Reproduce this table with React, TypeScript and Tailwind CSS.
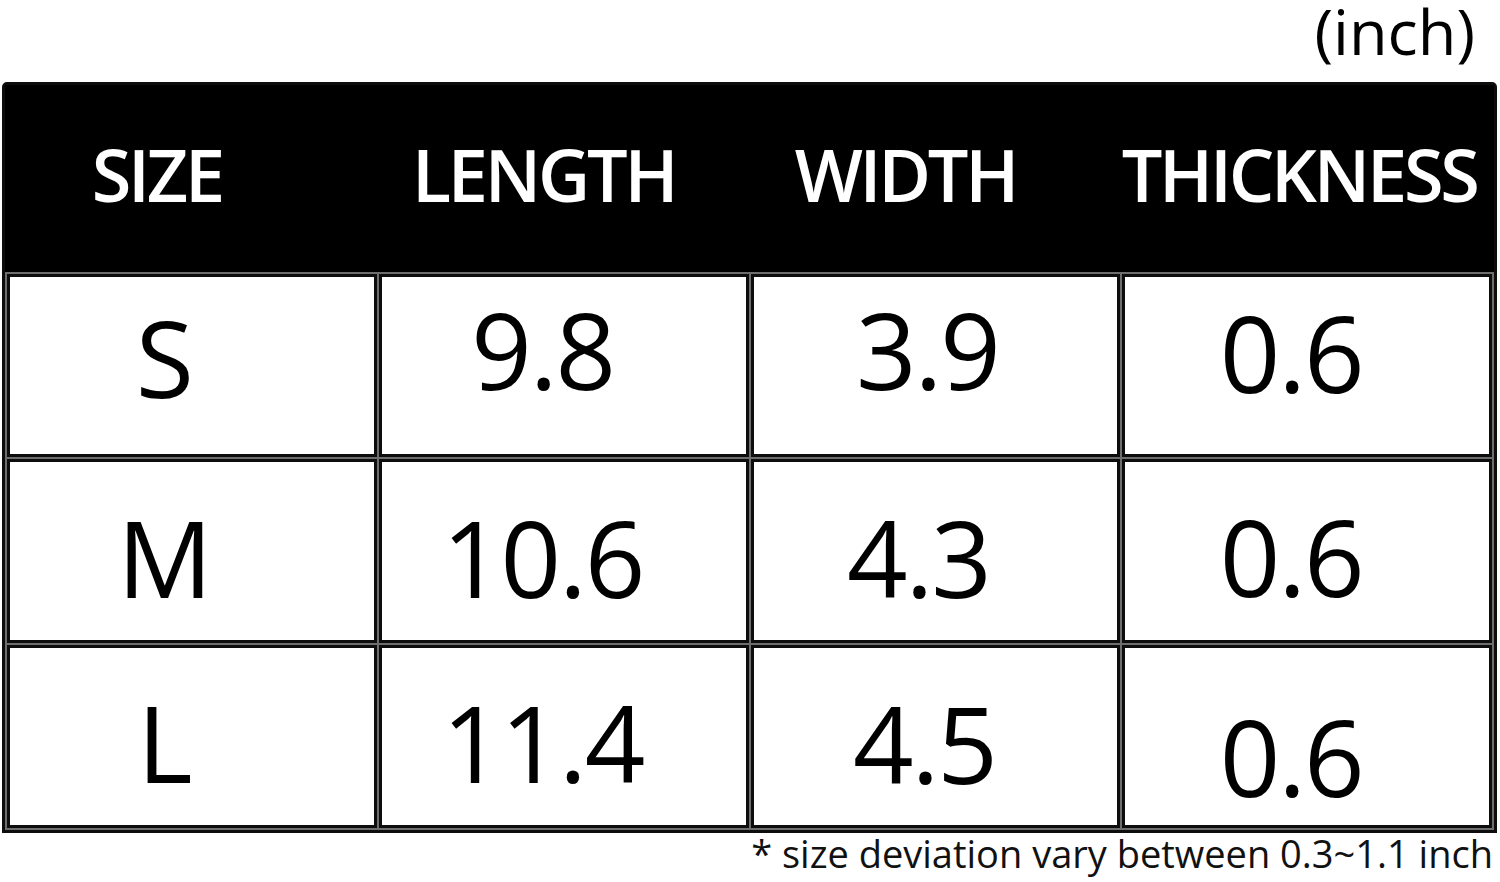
const headers = [
  { label: "SIZE", pad: "pr-[70px]" },
  { label: "LENGTH", pad: "pr-[40px]" },
  { label: "WIDTH", pad: "pr-[60px]" },
  { label: "THICKNESS", pad: "pr-[16px]" },
];

// each cell carries its own nudges so the glyphs sit where the chart has them
const rows = [
  {
    h: "h-[177px]",
    cells: [
      { v: "S", pad: "pr-[56px] pb-[17px]" },
      { v: "9.8", pad: "pr-[42px] pb-[34px]" },
      { v: "3.9", pad: "pr-[16px] pb-[34px]" },
      { v: "0.6", pad: "pr-[32px] pb-[27px]" },
    ],
  },
  {
    h: "h-[178px]",
    cells: [
      { v: "M", pad: "pr-[56px] pt-[12px]" },
      { v: "10.6", pad: "pr-[42px] pt-[12px]" },
      { v: "4.3", pad: "pr-[34px] pt-[12px]" },
      { v: "0.6", pad: "pr-[32px] pt-[10px]" },
    ],
  },
  {
    h: "h-[177px]",
    cells: [
      { v: "L", pad: "pr-[56px] pt-[11px]" },
      { v: "11.4", pad: "pr-[42px] pt-[11px]" },
      { v: "4.5", pad: "pr-[22px] pt-[13px]" },
      { v: "0.6", pad: "pr-[32px] pt-[39px]" },
    ],
  },
];

export default function App() {
  return (
    <main className="w-[1500px] h-[882px] bg-white overflow-hidden font-['Open_Sans',sans-serif] text-black">
      {/* Unit label */}
      <div className="h-[82px] flex justify-end pr-[25px]">
        <span className="text-[63px] leading-[62px]">(inch)</span>
      </div>

      {/* Size table */}
      <div className="ml-[2px] w-[1495px] border-[3px] border-[#0d0d0d] rounded-t-[5px] bg-[#6e6e6e]">
        {/* Header bar */}
        <div className="h-[187px] bg-black grid grid-cols-4 gap-[8px] px-[5px] pb-[10px]">
          {headers.map((h) => (
            <div
              key={h.label}
              className={`flex items-center justify-center text-white font-semibold text-[72px] leading-none tracking-[-0.045em] ${h.pad}`}
            >
              {h.label}
            </div>
          ))}
        </div>

        {/* Body rows */}
        <div className="flex flex-col gap-[8px] p-[5px]">
          {rows.map((row, i) => (
            <div key={i} className={`grid grid-cols-4 gap-[8px] ${row.h}`}>
              {row.cells.map((c, j) => (
                <div
                  key={j}
                  className={`bg-white shadow-[0_0_0_3px_#0d0d0d] flex items-center justify-center text-[106px] leading-none tracking-[-0.02em] ${c.pad}`}
                >
                  {c.v}
                </div>
              ))}
            </div>
          ))}
        </div>
      </div>

      {/* Note */}
      <div className="flex justify-end pr-[7px]">
        <span className="text-[38px] leading-[40px] text-[#111]">
          * size deviation vary between 0.3~1.1 inch
        </span>
      </div>
    </main>
  );
}
